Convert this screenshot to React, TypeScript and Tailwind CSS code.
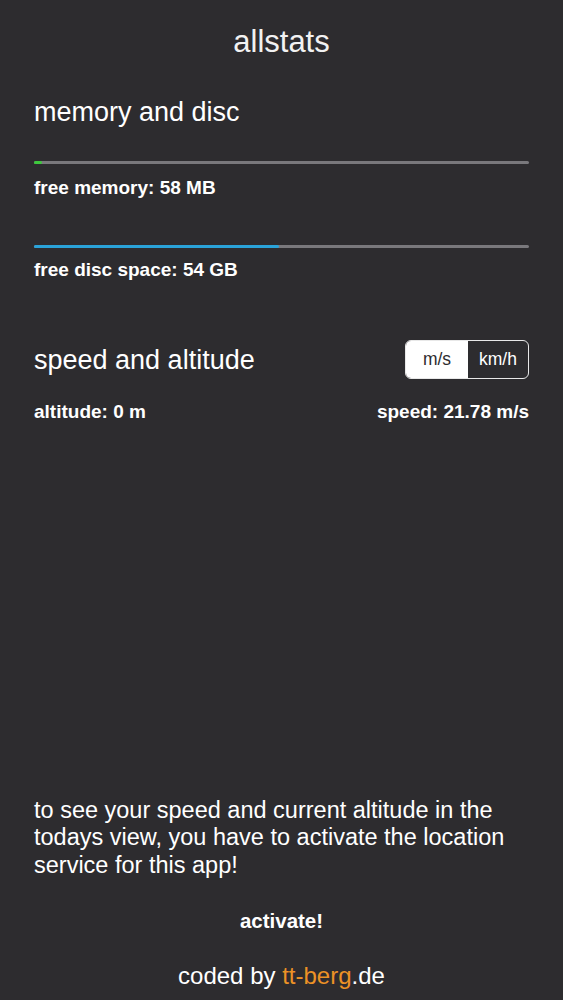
import React from 'react'

const font = { fontFamily: '"Liberation Sans", Arial, sans-serif' }

function Bar({ percent, color }: { percent: number; color: string }) {
  return (
    <div className="h-[3px] w-full rounded-full bg-[#79787c]">
      <div className={`h-full rounded-full ${color}`} style={{ width: `${percent}%` }} />
    </div>
  )
}

export default function App() {
  return (
    <div
      className="flex h-[1000px] w-full flex-col bg-[#2d2c2f] px-[34px] text-white"
      style={font}
    >
      <h1 className="pt-[24px] text-center text-[31px] leading-[36px] text-[#f2f2f2]">allstats</h1>

      <h2 className="mt-[36px] text-[27px] leading-[32px]">memory and disc</h2>

      <div className="mt-[33px]">
        <Bar percent={1.7} color="bg-[#3dc93d]" />
      </div>
      <p className="mt-[13px] text-[19px] font-bold leading-[22px]">free memory: 58 MB</p>

      <div className="mt-[46px]">
        <Bar percent={49.4} color="bg-[#2aa3d9]" />
      </div>
      <p className="mt-[11px] text-[19px] font-bold leading-[22px]">free disc space: 54 GB</p>

      <div className="mt-[59px] flex h-[39px] items-center justify-between">
        <h2 className="text-[27px] leading-[32px]">speed and altitude</h2>
        <div className="flex h-[39px] w-[124px] overflow-hidden rounded-[6px] border border-[#e8e8e8] text-[17.5px]">
          <div className="flex w-[62px] items-center justify-center bg-white text-[#2d2c2f]">m/s</div>
          <div className="flex flex-1 items-center justify-center">km/h</div>
        </div>
      </div>

      <div className="mt-[22px] flex justify-between text-[19px] font-bold leading-[22px]">
        <span>altitude: 0 m</span>
        <span>speed: 21.78 m/s</span>
      </div>

      <p className="mt-auto text-[23.5px] leading-[27.5px]">
        to see your speed and current altitude in the todays view, you have to activate the location service for this app!
      </p>

      <button className="mt-[30px] self-center text-[20.5px] font-bold leading-[24px]">activate!</button>

      <p className="mt-[29px] pb-[10px] text-center text-[24px] leading-[28px]">
        coded by <span className="text-[#ec9226]">tt-berg</span>.de
      </p>
    </div>
  )
}
